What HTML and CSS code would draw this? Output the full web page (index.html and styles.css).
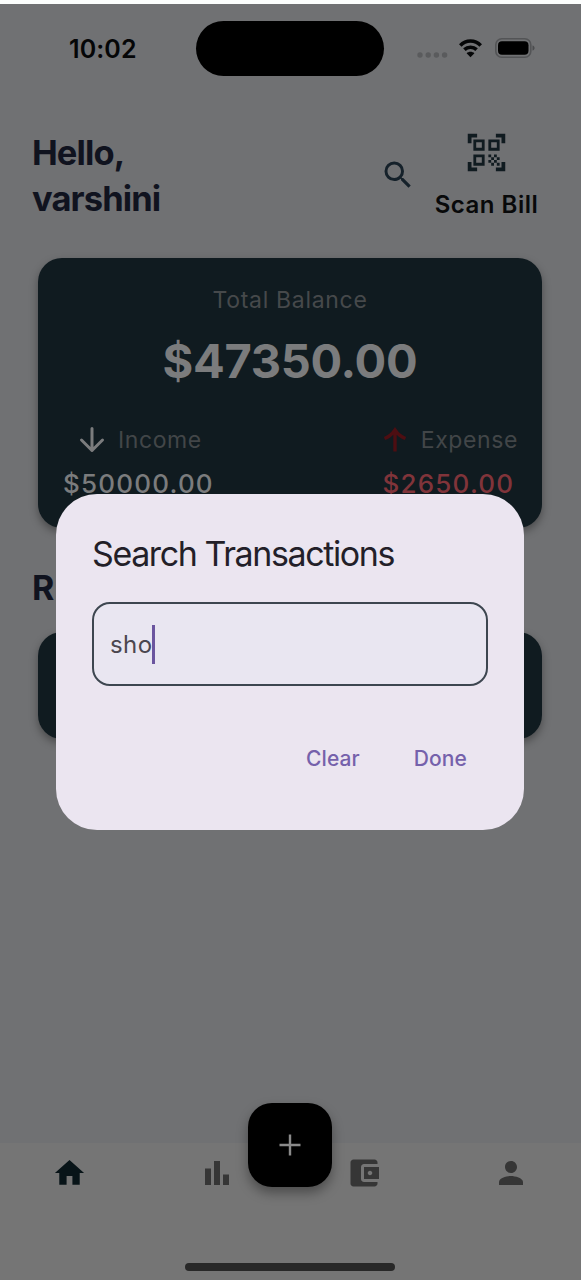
FILE: index.html
```html
<!DOCTYPE html>
<html lang="en">
<head>
<meta charset="utf-8">
<title>Expense Tracker</title>
<link rel="stylesheet" href="styles.css">
</head>
<body>
<div class="screen">
  <div class="status">
    <span class="clock">10:02</span>
    <span class="island"></span>
    <div class="indicators">
      <svg class="signal" width="31" height="8" viewBox="0 0 31 8"><circle cx="3" cy="4" r="2.700"/><circle cx="11.200" cy="4" r="2.700"/><circle cx="19.400" cy="4" r="2.700"/><circle cx="27.600" cy="4" r="2.700"/></svg>
      <svg class="wifi" width="25" height="20" viewBox="0 0 24 20"><path d="M1.800 7.400C7.400 1.600 16.600 1.600 22.200 7.400"/><path d="M5.900 11.600c3.300-3.200 8.900-3.200 12.200 0"/><path class="solid" d="M12 19.200l-3.900-3.900c2.100-2 5.700-2 7.800 0z"/></svg>
      <svg class="battery" width="41" height="20" viewBox="0 0 41 20"><rect class="shell" x=".8" y=".8" width="35" height="18.400" rx="6"/><rect x="3" y="3.200" width="30.500" height="13.600" rx="4"/><path class="tip" d="M37.500 7.500c2.800.6 2.800 4.400 0 5z"/></svg>
    </div>
  </div>

  <header class="header">
    <h1 class="greeting">Hello,<br>varshini</h1>
    <svg class="search" width="36" height="36" viewBox="0 0 24 24"><path d="M15.500 14h-.79l-.28-.27A6.471 6.471 0 0 0 16 9.500 6.500 6.500 0 1 0 9.500 16c1.610 0 3.090-.59 4.230-1.570l.27.28v.79l5 4.990L20.490 19l-4.990-5zm-6 0C7.010 14 5 11.990 5 9.500S7.010 5 9.500 5 14 7.010 14 9.500 11.990 14 9.500 14z"/></svg>
    <div class="scan">
      <svg width="45" height="45" viewBox="0 0 24 24"><path d="M9.500 6.500v3h-3v-3h3M11 5H5v6h6V5zM9.500 14.500v3h-3v-3h3M11 13H5v6h6v-6zM17.500 6.500v3h-3v-3h3M19 5h-6v6h6V5zM13 13h1.500v1.500H13zM14.500 14.500H16V16h-1.500zM16 13h1.500v1.500H16zM13 16h1.500v1.500H13zM14.500 17.500H16V19h-1.500zM16 16h1.500v1.500H16zM17.500 14.500H19V16h-1.500zM17.500 17.500H19V19h-1.500zM22 7h-2V4h-3V2h5v5zM22 22v-5h-2v3h-3v2h5zM2 22h5v-2H4v-3H2v5zM2 2v5h2V4h3V2H2z"/></svg>
      <span class="scan-label">Scan Bill</span>
    </div>
  </header>

  <section class="balance">
    <div class="balance-label">Total Balance</div>
    <div class="balance-total">$47350.00</div>
    <div class="flows">
      <div class="flow">
        <div class="flow-head">
          <svg class="down" width="26" height="28" viewBox="0 0 26 28"><path d="M13 2.500v22M2.500 14L13 24.500 23.500 14"/></svg>
          <span class="flow-label">Income</span>
        </div>
        <div class="amount">$50000.00</div>
      </div>
      <div class="flow expense">
        <div class="flow-head">
          <svg class="up" width="26" height="28" viewBox="0 0 26 28"><path d="M13 25.500V4M2.500 12.500Q9 10 13 4q4 6 10.500 8.500"/></svg>
          <span class="flow-label">Expense</span>
        </div>
        <div class="amount spent">$2650.00</div>
      </div>
    </div>
  </section>

  <h2 class="section-title">R</h2>
  <section class="entry"></section>

  <nav class="nav">
    <div class="tabs">
      <div class="tab-group">
        <svg class="active" width="35" height="36" viewBox="0 0 24 24"><path d="M10 20v-6h4v6h5v-8h3L12 3 2 12h3v8z"/></svg>
        <svg width="36" height="36" viewBox="0 0 24 24"><path d="M4 9h4v11H4zm12 4h4v7h-4zm-6-9h4v16h-4z"/></svg>
      </div>
      <div class="tab-group">
        <svg width="36" height="36" viewBox="0 0 24 24"><path d="M21 18v1c0 1.100-.9 2-2 2H5c-1.110 0-2-.9-2-2V5c0-1.100.89-2 2-2h14c1.100 0 2 .9 2 2v1h-9c-1.110 0-2 .9-2 2v8c0 1.100.89 2 2 2h9zm-9-2h10V8H12v8zm4-2.500c-.83 0-1.500-.67-1.500-1.500s.67-1.500 1.500-1.500 1.500.67 1.500 1.500-.67 1.500-1.500 1.500z"/></svg>
        <svg width="36" height="36" viewBox="0 0 24 24"><path d="M12 12c2.210 0 4-1.790 4-4s-1.790-4-4-4-4 1.790-4 4 1.790 4 4 4zm0 2c-2.670 0-8 1.340-8 4v2h16v-2c0-2.660-5.330-4-8-4z"/></svg>
      </div>
    </div>
    <div class="home-bar"></div>
    <div class="fab"><svg width="24" height="24" viewBox="0 0 24 24"><path d="M12 1.500v21M1.500 12h21"/></svg></div>
  </nav>

  <div class="dialog">
    <h3 class="dialog-title">Search Transactions</h3>
    <div class="field"><span class="typed">sho</span><span class="caret"></span></div>
    <div class="actions"><span class="action">Clear</span><span class="action">Done</span></div>
  </div>
</div>
</body>
</html>
```
FILE: styles.css
```css
* { box-sizing: border-box; }
body { margin: 0; font-family: Inter, "Liberation Sans", sans-serif; }
h1, h2, h3 { margin: 0; }
svg { display: block; flex: none; }

.screen {
  position: relative;
  display: flex;
  flex-direction: column;
  width: 581px;
  height: 1280px;
  overflow: hidden;
  background: #707173;
  border-top: 4px solid #fcfefd;
}

.status { display: flex; align-items: center; height: 89px; padding: 0 45px 0 69px; }
.clock { width: 127px; font-size: 25px; font-weight: 600; letter-spacing: 0.1px; color: #050607; }
.island { width: 188px; height: 55px; border-radius: 28px; background: #000; }
.indicators { display: flex; align-items: center; margin-left: auto; }
.signal { fill: #5a5b5d; margin: 13px 10px 0 0; }
.wifi { fill: none; stroke: #050607; stroke-width: 3.6; margin: -1px 12px 0 0; }
.wifi .solid { fill: #050607; stroke: none; }
.battery { fill: #000; margin-top: -1px; }
.battery .shell { fill: none; stroke: #535456; stroke-width: 1.6; }
.battery .tip { fill: #4b4c4e; }

.header { display: flex; height: 165px; padding: 37px 42px 0 32px; }
.greeting { flex: 1; font-size: 34.5px; line-height: 46px; font-weight: 700; letter-spacing: -0.9px; color: #10131f; }
.search { margin: 27px 18px 0 0; fill: #15212a; }
.scan { display: flex; flex-direction: column; align-items: center; width: 105px; }
.scan svg { fill: #101b20; }
.scan-label { font-size: 24px; line-height: 30px; margin-top: 15px; font-weight: 600; letter-spacing: 0.5px; white-space: nowrap; color: #08090a; }

.balance {
  flex: none;
  height: 270px;
  margin: 0 39px 0 38px;
  padding-top: 25px;
  border-radius: 24px;
  background: #101b20;
  box-shadow: 0 4px 8px rgba(0, 0, 0, 0.35);
  text-align: center;
}
.balance-label { font-size: 23px; line-height: 34px; letter-spacing: 0.7px; color: #46494b; }
.balance-total { font-size: 47px; line-height: 60px; margin-top: 14px; font-weight: 650; letter-spacing: -0.3px; color: #7b7c7d; }
.flows { display: flex; justify-content: space-between; margin-top: 32px; padding: 0 24px 0 25px; }
.flow { display: flex; flex-direction: column; align-items: center; }
.flow-head { display: flex; align-items: center; height: 34px; gap: 13px; }
.flow:first-child .flow-head { padding-left: 4px; }
.flow-label { font-size: 23px; letter-spacing: 0.6px; color: #424648; }
.down { fill: none; stroke: #7b7c7d; stroke-width: 3; stroke-linecap: round; stroke-linejoin: round; }
.up { fill: none; stroke: #4d0e12; stroke-width: 3.4; }
.amount { font-size: 26px; line-height: 34px; margin-top: 10px; font-weight: 500; letter-spacing: 1.2px; color: #7b7c7d; }
.spent { padding-right: 3px; color: #80343a; }

.section-title { margin: 38px 0 0 32px; font-size: 34px; line-height: 44px; font-weight: 700; color: #10131f; }
.entry {
  flex: none;
  height: 107px;
  margin: 22px 39px 0 38px;
  border-radius: 24px;
  background: #101b20;
  box-shadow: 0 4px 8px rgba(0, 0, 0, 0.35);
}

.nav { position: relative; margin-top: auto; height: 137px; padding: 12px 52px 0; background: #757575; }
.tabs { display: flex; justify-content: space-between; fill: #363636; }
.tab-group { display: flex; justify-content: space-between; width: 183px; }
.tabs .active { fill: #081418; }
.home-bar { width: 210px; height: 8px; margin: 72px 0 0 133px; border-radius: 4px; background: #282828; }
.fab {
  position: absolute;
  left: 248px;
  top: -40px;
  display: grid;
  place-items: center;
  width: 84px;
  height: 84px;
  border-radius: 24px;
  background: #000;
  box-shadow: 0 6px 12px rgba(0, 0, 0, 0.35);
}
.fab svg { fill: none; stroke: #8a8a8a; stroke-width: 2.4; }

.dialog {
  position: absolute;
  left: 56px;
  top: 490px;
  width: 468px;
  height: 336px;
  padding: 36px;
  border-radius: 41px;
  background: #ebe5f0;
}
.dialog-title { font-size: 34px; line-height: 48px; font-weight: 400; letter-spacing: -1.4px; white-space: nowrap; color: #231f29; }
.field {
  display: flex;
  align-items: center;
  height: 84px;
  margin-top: 24px;
  padding-left: 16px;
  border: 2.500px solid #3d4650;
  border-radius: 18px;
  background: #e9e6f1;
}
.typed { font-size: 24px; line-height: 30px; padding-top: 2px; letter-spacing: 0.4px; color: #4b464f; }
.caret { width: 3px; height: 39px; background: #6b559f; }
.actions { display: flex; justify-content: flex-end; gap: 54px; margin-top: 58px; padding-right: 21px; }
.action { font-size: 21px; line-height: 30px; font-weight: 500; letter-spacing: 0.1px; color: #7561ab; }
```
